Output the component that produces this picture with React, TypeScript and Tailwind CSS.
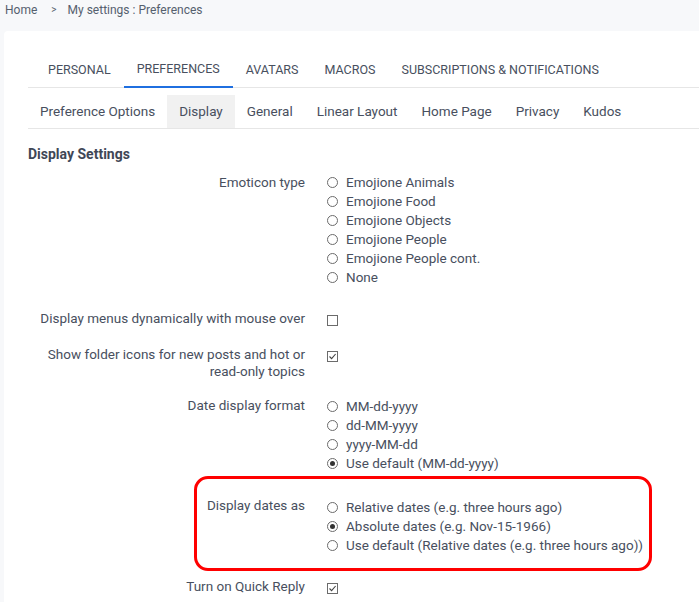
import React from "react";

const Radio = ({ checked = false }: { checked?: boolean }) => (
  <span className="mr-[8px] inline-flex h-[11px] w-[11px] shrink-0 items-center justify-center rounded-full border border-[#6b6b6b] bg-white">
    {checked && <span className="h-[5px] w-[5px] rounded-full bg-[#333]" />}
  </span>
);

const Check = ({ checked = false }: { checked?: boolean }) => (
  <span className="inline-flex h-[11px] w-[11px] items-center justify-center border border-[#6b6b6b] bg-white">
    {checked && (
      <svg width="9" height="9" viewBox="0 0 9 9">
        <path d="M1.5 4.5 L3.6 6.6 L7.6 2" fill="none" stroke="#444" strokeWidth="1.1" />
      </svg>
    )}
  </span>
);

const RadioList = ({ items, checked }: { items: string[]; checked: number }) => (
  <div className="flex flex-col">
    {items.map((t, i) => (
      <div key={t} className="flex h-[19px] items-center">
        <Radio checked={i === checked} />
        <span>{t}</span>
      </div>
    ))}
  </div>
);

export default function App() {
  const tabs = ["PERSONAL", "PREFERENCES", "AVATARS", "MACROS", "SUBSCRIPTIONS & NOTIFICATIONS"];
  const subtabs = ["Preference Options", "Display", "General", "Linear Layout", "Home Page", "Privacy", "Kudos"];
  return (
    <div
      className="min-h-[602px] w-[699px] overflow-hidden bg-[#f7f8fa] text-[#484f5e]"
      style={{ fontFamily: "Roboto, 'Liberation Sans', sans-serif" }}
    >
      <div className="flex h-[31px] items-start pl-[5px] pt-[2px] text-[12px] leading-[16px] text-[#55606e]">
        <span>Home</span>
        <span className="ml-[14px] mr-[11px] text-[10px]">&gt;</span>
        <span>My settings : Preferences</span>
      </div>
      <div className="ml-[4px] min-h-[571px] rounded-tl-[4px] bg-white pl-[24px] pt-[21px]">
        <div className="flex h-[36px] border-b border-[#e6e6e6] pl-[7px] text-[12.5px]">
          {tabs.map((t) => (
            <div
              key={t}
              className={
                "flex h-[36px] items-center px-[13px] " +
                (t === "PREFERENCES" ? "border-b-2 border-[#1f6fe0]" : "")
              }
            >
              {t}
            </div>
          ))}
        </div>
        <div className="mt-[7px] flex h-[34px] border-b border-[#e6e6e6] text-[13.5px]">
          {subtabs.map((t) => (
            <div
              key={t}
              className={"flex h-[33px] items-center px-[12px] " + (t === "Display" ? "bg-[#f1f1f1]" : "")}
            >
              {t}
            </div>
          ))}
        </div>
        <div className="mt-[16px] text-[14px] font-bold leading-[19px] text-[#3f4756]">Display Settings</div>
        <div className="text-[13.5px] leading-[19px]">
          <div className="mt-[9px] grid grid-cols-[277px_1fr] gap-x-[22px]">
            <div className="text-right">Emoticon type</div>
            <RadioList
              items={[
                "Emojione Animals",
                "Emojione Food",
                "Emojione Objects",
                "Emojione People",
                "Emojione People cont.",
                "None",
              ]}
              checked={-1}
            />
          </div>
          <div className="mt-[22px] grid grid-cols-[277px_1fr] gap-x-[22px]">
            <div className="text-right">Display menus dynamically with mouse over</div>
            <div className="flex h-[19px] items-center pt-[3px]">
              <Check />
            </div>
          </div>
          <div className="mt-[18px] grid grid-cols-[277px_1fr] gap-x-[22px]">
            <div className="text-right leading-[17px]">
              Show folder icons for new posts and hot or
              <br />
              read-only topics
            </div>
            <div className="flex h-[17px] items-center pt-[3px]">
              <Check checked />
            </div>
          </div>
          <div className="mt-[16px] grid grid-cols-[277px_1fr] gap-x-[22px]">
            <div className="text-right">Date display format</div>
            <div className="pt-[1px]">
              <RadioList items={["MM-dd-yyyy", "dd-MM-yyyy", "yyyy-MM-dd", "Use default (MM-dd-yyyy)"]} checked={3} />
            </div>
          </div>
          <div className="relative mt-[23px] grid grid-cols-[277px_1fr] gap-x-[22px]">
            <div className="pointer-events-none absolute left-[166px] top-[-20px] h-[95px] w-[458px] rounded-[14px] border-[3px] border-[#ff0000]" />
            <div className="text-right">Display dates as</div>
            <div className="pt-[2px]">
              <RadioList
                items={[
                  "Relative dates (e.g. three hours ago)",
                  "Absolute dates (e.g. Nov-15-1966)",
                  "Use default (Relative dates (e.g. three hours ago))",
                ]}
                checked={1}
              />
            </div>
          </div>
          <div className="mt-[22px] grid grid-cols-[277px_1fr] gap-x-[22px]">
            <div className="text-right">Turn on Quick Reply</div>
            <div className="flex h-[19px] items-center pt-[3px]">
              <Check checked />
            </div>
          </div>
        </div>
      </div>
    </div>
  );
}
